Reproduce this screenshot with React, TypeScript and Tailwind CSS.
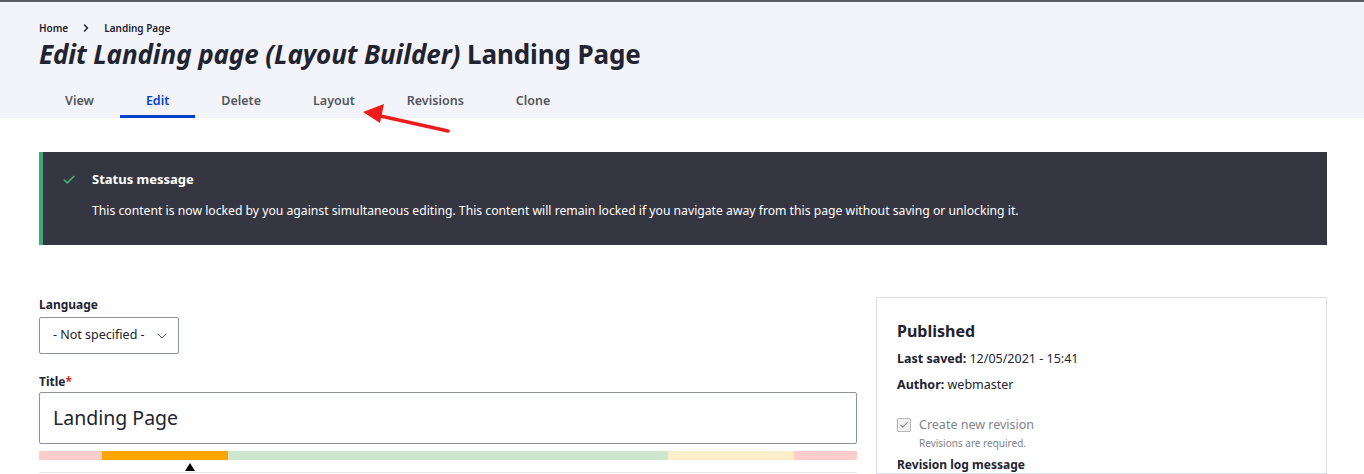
import React from "react";
import { Check, ChevronDown, ChevronRight } from "lucide-react";

const TABS = [
  { label: "View" },
  { label: "Edit", active: true },
  { label: "Delete" },
  { label: "Layout" },
  { label: "Revisions" },
  { label: "Clone" },
];

const SEGMENTS = [
  { w: 63, cls: "bg-[#ffcccc]" },
  { w: 126, cls: "bg-[#ffa500]" },
  { w: 440, cls: "bg-[#cde6cd]" },
  { w: 126, cls: "bg-[#ffeecc]" },
  { w: 63, cls: "bg-[#ffcccc]" },
];

export default function App() {
  return (
    <div className="relative min-h-[474px] bg-white text-[#222330] font-['Noto_Sans',sans-serif]">
      <header className="border-t-2 border-[#5b5b60] bg-[#f3f4f9] pl-[39px] pr-[37px]">
        <nav className="flex items-center gap-3 pt-[17px] text-[10px] font-semibold leading-[18px]">
          <span>Home</span>
          <ChevronRight className="h-3 w-3" strokeWidth={3} />
          <span>Landing Page</span>
        </nav>
        <h1 className="text-[26px] font-bold leading-[34px] tracking-[-0.1px]">
          <em>Edit Landing page (Layout Builder)</em> Landing Page
        </h1>
        <ul className="mt-[16px] flex">
          {TABS.map((tab) => (
            <li
              key={tab.label}
              className={`px-[26px] pt-[4px] pb-[4px] text-[12.5px] font-semibold leading-[20px] border-b-[3px] ${
                tab.active ? "border-[#003ecc] text-[#003ecc]" : "border-transparent text-[#55565b]"
              }`}
            >
              {tab.label}
            </li>
          ))}
        </ul>
      </header>

      <svg className="absolute left-0 top-0 pointer-events-none" width="500" height="150">
        <line x1="448" y1="131" x2="376" y2="115" stroke="#ee1c1c" strokeWidth="3.5" strokeLinecap="round" />
        <polygon points="363,112 384,104 380,123" fill="#ee1c1c" />
      </svg>

      <main className="pl-[39px] pr-[37px] pt-[34px]">
        <div className="flex h-[93px] border-l-4 border-[#42a877] bg-[#353641] text-white">
          <Check className="ml-[19px] mt-[21px] h-[14px] w-[14px] text-[#42a877]" strokeWidth={3} />
          <div className="ml-[16px] pt-[17px]">
            <p className="text-[13px] font-bold leading-[20px]">Status message</p>
            <p className="mt-[12px] text-[12.2px] leading-[20px]">
              This content is now locked by you against simultaneous editing. This content will remain locked if you
              navigate away from this page without saving or unlocking it.
            </p>
          </div>
        </div>

        <div className="mt-[52px] flex gap-[19px]">
          <div className="w-[818px] shrink-0">
            <label className="block text-[12px] font-bold leading-[16px]">Language</label>
            <div className="mt-[4px] flex h-[37px] w-[140px] items-center gap-[9px] whitespace-nowrap rounded-[2px] border border-[#8e929c] pl-[13px] text-[12.5px]">
              <span>- Not specified -</span>
              <ChevronDown className="h-4 w-4 shrink-0 text-[#55565b]" strokeWidth={1.5} />
            </div>

            <label className="mt-[20px] block text-[12px] font-bold leading-[16px]">
              Title<span className="text-[#dc2323]">*</span>
            </label>
            <div className="mt-[2px] flex h-[52px] items-center rounded-[2px] border border-[#8e929c] px-[13px] text-[19.5px]">
              Landing Page
            </div>
            <div className="mt-[7px] flex h-[9px]">
              {SEGMENTS.map((s, i) => (
                <div key={i} className={s.cls} style={{ width: s.w }} />
              ))}
            </div>
            <div className="relative h-[12px]">
              <div className="absolute left-[146px] top-[3px] h-0 w-0 border-x-[5px] border-b-[8px] border-x-transparent border-b-black" />
            </div>
            <div className="h-px bg-[#e6e7ea]" />
          </div>

          <aside className="flex-1 border border-[#dedfe4] px-[20px] pt-[22px]">
            <h3 className="text-[16px] font-bold leading-[22px]">Published</h3>
            <p className="mt-[8px] text-[12.5px] leading-[18px]">
              <b>Last saved:</b> 12/05/2021 - 15:41
            </p>
            <p className="mt-[8px] text-[12.5px] leading-[18px]">
              <b>Author:</b> webmaster
            </p>
            <div className="mt-[22px] flex items-center gap-[8px]">
              <span className="flex h-[14px] w-[14px] items-center justify-center rounded-[2px] border border-[#b7b8bd] bg-[#f0f0f2]">
                <Check className="h-[10px] w-[10px] text-[#82828c]" strokeWidth={2.5} />
              </span>
              <span className="text-[12.5px] text-[#82828c]">Create new revision</span>
            </div>
            <p className="ml-[22px] mt-[1px] text-[10px] leading-[14px] text-[#82828c]">Revisions are required.</p>
            <p className="mt-[7px] text-[12px] font-bold leading-[16px]">Revision log message</p>
          </aside>
        </div>
      </main>
    </div>
  );
}
